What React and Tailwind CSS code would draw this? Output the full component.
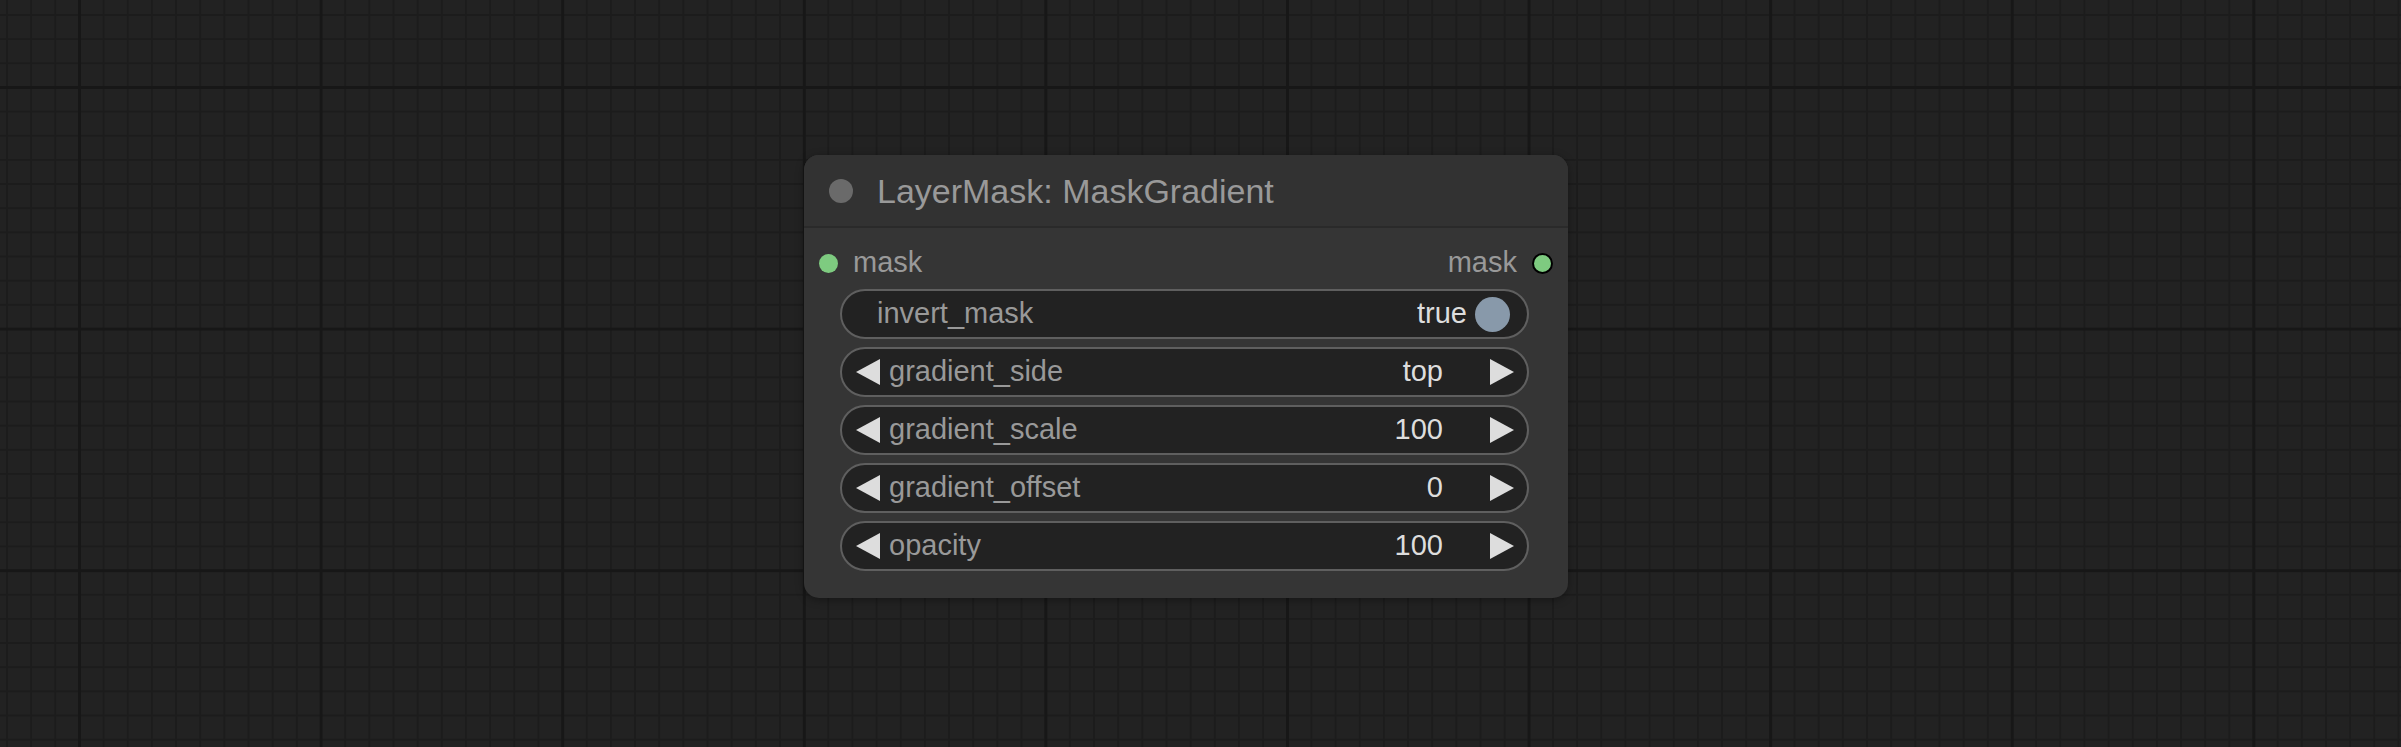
import React from 'react';

const widgets = [
  { kind: 'toggle', label: 'invert_mask', value: 'true' },
  { kind: 'combo', label: 'gradient_side', value: 'top' },
  { kind: 'number', label: 'gradient_scale', value: '100' },
  { kind: 'number', label: 'gradient_offset', value: '0' },
  { kind: 'number', label: 'opacity', value: '100' }
];

const Arrow = ({ dir }) => (
  <svg width="24" height="26" viewBox="0 0 24 26" className="shrink-0">
    {dir === 'left' ? (
      <polygon points="24,0 24,26 0,13" fill="#dddddd" />
    ) : (
      <polygon points="0,0 0,26 24,13" fill="#dddddd" />
    )}
  </svg>
);

const Widget = ({ w }) => {
  if (w.kind === 'toggle') {
    return (
      <div className="h-[50px] rounded-full border-2 border-[#5f5f5f] bg-[#222222] flex items-center pl-[35px] pr-[17px]">
        <span className="text-[#999999]">{w.label}</span>
        <span className="ml-auto text-[#dddddd]">{w.value}</span>
        <span className="ml-[8px] w-[35px] h-[35px] rounded-full bg-[#8899aa]" />
      </div>
    );
  }
  return (
    <div className="h-[50px] rounded-full border-2 border-[#5f5f5f] bg-[#222222] flex items-center pl-[14px] pr-[13px]">
      <Arrow dir="left" />
      <span className="ml-[9px] text-[#999999]">{w.label}</span>
      <span className="ml-auto text-[#dddddd]">{w.value}</span>
      <span className="ml-[47px] flex">
        <Arrow dir="right" />
      </span>
    </div>
  );
};

const App = () => {
  return (
    <div
      className="relative w-[2401px] h-[747px] overflow-hidden bg-[#222222] font-['Liberation_Sans',Arial,sans-serif]
        bg-[linear-gradient(#171717_3px,transparent_3px),linear-gradient(90deg,#171717_3px,transparent_3px),linear-gradient(#1c1c1c_2px,transparent_2px),linear-gradient(90deg,#1c1c1c_2px,transparent_2px)]
        bg-size-[241.6px_241.6px,241.6px_241.6px,24.16px_24.16px,24.16px_24.16px]
        bg-position-[78px_86px,78px_86px,6px_14px,6px_14px]"
    >
      <div className="absolute left-[804px] top-[155px] w-[764px] h-[443px] rounded-[15px] bg-[#353535] shadow-[0_2px_8px_rgba(0,0,0,0.35)] flex flex-col">
        <div className="h-[73px] rounded-t-[15px] bg-[#323232] border-b-2 border-[#2a2a2a] flex items-center pl-[25px]">
          <span className="w-[24px] h-[24px] rounded-full bg-[#6a6a6a]" />
          <span className="ml-[24px] text-[34px] text-[#999999] leading-none">LayerMask: MaskGradient</span>
        </div>

        <div className="mt-[20px] h-[30px] flex items-center text-[29px] text-[#999999] pl-[15px] pr-[15px]">
          <span className="w-[19px] h-[19px] rounded-full bg-[#7ecb80]" />
          <span className="ml-[15px]">mask</span>
          <span className="ml-auto">mask</span>
          <span className="ml-[15px] w-[21px] h-[21px] rounded-full bg-[#7ecb80] border-2 border-black" />
        </div>

        <div className="mt-[11px] ml-[36px] mr-[39px] flex flex-col gap-[8px] text-[29px]">
          {widgets.map((w) => (
            <Widget key={w.label} w={w} />
          ))}
        </div>
      </div>
    </div>
  );
};

export default App;
